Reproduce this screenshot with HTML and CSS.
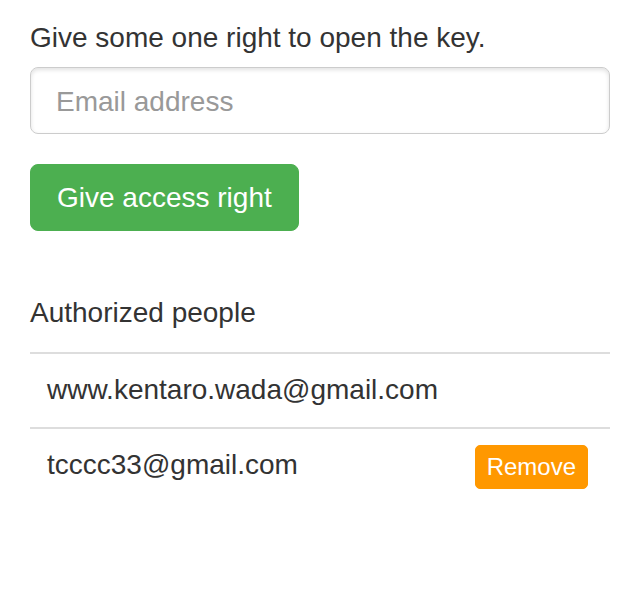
FILE: index.html
```html
<!DOCTYPE html>
<html lang="en">
<head>
<meta charset="utf-8">
<title>Access rights</title>
<link rel="stylesheet" href="styles.css">
</head>
<body>
<div class="container">
  <form class="grant-form">
    <label class="form-label" for="email">Give some one right to open the key.</label>
    <input class="form-input" id="email" type="email" placeholder="Email address">
    <button class="btn btn-success" type="button">Give access right</button>
  </form>
  <h2 class="section-title">Authorized people</h2>
  <table class="people-table">
    <tbody>
      <tr>
        <td class="email-cell">www.kentaro.wada@gmail.com</td>
        <td class="action-cell"></td>
      </tr>
      <tr>
        <td class="email-cell">tcccc33@gmail.com</td>
        <td class="action-cell"><button class="btn-remove" type="button">Remove</button></td>
      </tr>
    </tbody>
  </table>
</div>
</body>
</html>
```
FILE: styles.css
```css
* { box-sizing: border-box; }
html, body { margin: 0; padding: 0; background: #fff; }
body {
  font-family: "Liberation Sans", Arial, sans-serif;
  font-size: 28px;
  line-height: 40px;
  color: #333;
}
.container {
  padding: 18px 29px 0 30px;
}
.grant-form {
  display: flex;
  flex-direction: column;
  align-items: flex-start;
}
.form-label {
  display: block;
  margin-bottom: 9px;
  font-weight: normal;
}
.form-input {
  display: block;
  width: 100%;
  height: 67px;
  padding: 13px 25px 11px;
  font-family: inherit;
  font-size: 28px;
  line-height: 40px;
  color: #555;
  background: #fff;
  border: 1.5px solid #ccc;
  border-radius: 8px;
  box-shadow: inset 0 2px 4px rgba(0,0,0,0.12);
  outline: none;
}
.form-input::placeholder { color: #999; }
.btn {
  margin-top: 30px;
  height: 67px;
  padding: 12px 26px;
  font-family: inherit;
  font-size: 28px;
  line-height: 40px;
  border: 1px solid transparent;
  border-radius: 8px;
  cursor: pointer;
}
.btn-success {
  background: #4caf50;
  border-color: #4caf50;
  color: #fff;
}
.section-title {
  margin: 62px 0 19px;
  font-size: 28px;
  line-height: 40px;
  font-weight: normal;
}
.people-table {
  width: 100%;
  border-collapse: collapse;
}
.people-table td {
  border-top: 2px solid #ddd;
  padding: 16px 16px 17px 17px;
  vertical-align: top;
}
.action-cell { text-align: right; }
.btn-remove {
  height: 44px;
  padding: 3px 11px;
  margin-right: 6px;
  font-family: inherit;
  font-size: 24px;
  line-height: 36px;
  color: #fff;
  background: #ff9800;
  border: 1px solid #ff9800;
  border-radius: 5px;
  cursor: pointer;
}
```
